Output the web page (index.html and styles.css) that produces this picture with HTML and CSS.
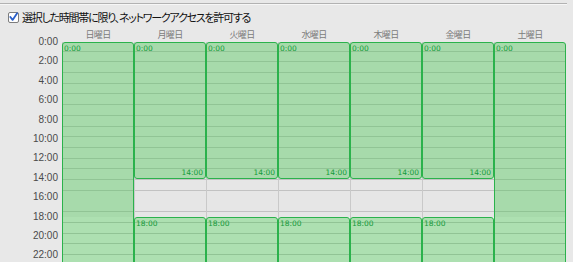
FILE: index.html
```html
<!DOCTYPE html>
<html>
<head>
    <title>アクセス時間帯</title>
    <meta charset="utf-8">
    <link rel="stylesheet" href="styles.css">
</head>
<body>
<div class="rule"></div>
<label class="option">
    <span class="check">
        <svg width="10" height="10" viewBox="0 0 10 10"><path d="M1.5 5 L4 8.2 L9 0.8" fill="none" stroke="#2a5fc9" stroke-width="2" stroke-linecap="round" stroke-linejoin="round"/></svg>
    </span>
    <span>選択した時間帯に限り、ネットワークアクセスを許可する</span>
</label>

<ul class="days">
    <li></li>
    <li>日曜日</li>
    <li>月曜日</li>
    <li>火曜日</li>
    <li>水曜日</li>
    <li>木曜日</li>
    <li>金曜日</li>
    <li>土曜日</li>
</ul>

<div class="week">
    <ul class="hours">
        <li>0:00</li>
        <li>2:00</li>
        <li>4:00</li>
        <li>6:00</li>
        <li>8:00</li>
        <li>10:00</li>
        <li>12:00</li>
        <li>14:00</li>
        <li>16:00</li>
        <li>18:00</li>
        <li>20:00</li>
        <li>22:00</li>
    </ul>
    <div class="day">
        <div class="block all"><span class="from">0:00</span></div>
    </div>
    <div class="day">
        <div class="block am"><span class="from">0:00</span><span class="to">14:00</span></div>
        <div class="block pm"><span class="from">18:00</span></div>
    </div>
    <div class="day">
        <div class="block am"><span class="from">0:00</span><span class="to">14:00</span></div>
        <div class="block pm"><span class="from">18:00</span></div>
    </div>
    <div class="day">
        <div class="block am"><span class="from">0:00</span><span class="to">14:00</span></div>
        <div class="block pm"><span class="from">18:00</span></div>
    </div>
    <div class="day">
        <div class="block am"><span class="from">0:00</span><span class="to">14:00</span></div>
        <div class="block pm"><span class="from">18:00</span></div>
    </div>
    <div class="day">
        <div class="block am"><span class="from">0:00</span><span class="to">14:00</span></div>
        <div class="block pm"><span class="from">18:00</span></div>
    </div>
    <div class="day">
        <div class="block all"><span class="from">0:00</span></div>
    </div>
</div>
</body>
</html>
```

FILE: styles.css
```css
* {
    margin: 0;
    padding: 0;
    box-sizing: border-box;
}

html, body {
    height: 100%;
    overflow: hidden;
}

body {
    background: #e8e8e8;
    font-family: "Noto Sans CJK JP", "Liberation Sans", sans-serif;
    color: #111;
}

ul {
    list-style: none;
}

.rule {
    width: 567px;
    margin-top: 3px;
    border-top: 1px solid #b2b2b2;
    border-bottom: 1px solid #f6f6f6;
}

.option {
    display: flex;
    align-items: center;
    gap: 3px;
    height: 14px;
    margin-top: 5px;
    padding-left: 8px;
    font-size: 11px;
    letter-spacing: -1.25px;
    font-feature-settings: "palt";
}

.check {
    display: flex;
    align-items: center;
    justify-content: center;
    width: 11px;
    height: 11px;
    background: #fff;
    border: 1px solid #7d7d7d;
    border-radius: 2px;
}

.days {
    display: grid;
    grid-template-columns: 62px repeat(7, 72px);
    height: 13px;
    margin-top: 4px;
    font-size: 9px;
    line-height: 13px;
    letter-spacing: -0.6px;
    color: #7b7b7b;
    text-align: center;
}

/* one hour = 9.7px */
.week {
    display: grid;
    grid-template-columns: 62px repeat(7, 72px);
    height: 233px;
    margin-top: 1px;
}

.hours {
    transform: translateY(-9.7px);
    padding-right: 4px;
    font-family: "Liberation Sans", sans-serif;
    font-size: 10px;
    color: #4a4a4a;
    text-align: right;
}

.hours li {
    height: 19.4px;
    line-height: 19.4px;
}

.day {
    position: relative;
    background:
        linear-gradient(to right, #c9c9c9 1px, transparent 1px),
        repeating-linear-gradient(to bottom, transparent 0, transparent 9.7px, #c2c2c2 9.7px, #c2c2c2 10.7px),
        linear-gradient(to bottom, #e6e6e6 174.6px, #f1f1f1 174.6px);
    background-position: 0 0, 0 -1px, 0 0;
}

.block {
    position: absolute;
    left: 0;
    right: 0;
    border: 1px solid #2bb24c;
    border-radius: 3px;
    background: rgba(72, 200, 82, 0.4);
    font-family: "DejaVu Sans", sans-serif;
    font-size: 7.5px;
    color: #159a3a;
}

.all {
    top: 0;
    height: 233px;
}

.am {
    top: 0;
    height: 136.8px;
}

.pm {
    top: 174.6px;
    height: 60px;
}

.from {
    position: absolute;
    left: 1px;
    top: 1px;
}

.to {
    position: absolute;
    right: 2px;
    bottom: 1px;
}
```
